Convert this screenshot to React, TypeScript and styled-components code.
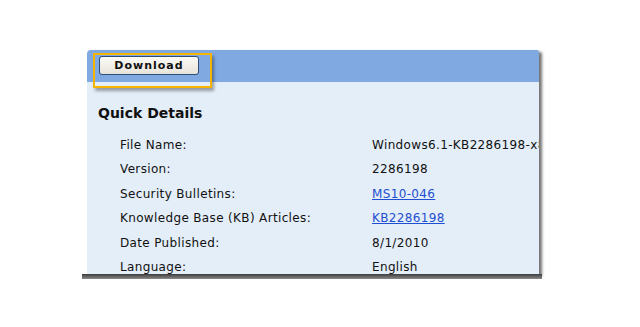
import styled, { createGlobalStyle } from "styled-components";

const GlobalStyle = createGlobalStyle`
  html, body {
    margin: 0;
    padding: 0;
    background: #ffffff;
  }
  body {
    font-family: "DejaVu Sans", Verdana, sans-serif;
  }
`;

type detailRow = {
  label: string;
  value: string;
  link?: boolean;
};

const details: detailRow[] = [
  { label: "File Name:", value: "Windows6.1-KB2286198-x86.msu" },
  { label: "Version:", value: "2286198" },
  { label: "Security Bulletins:", value: "MS10-046", link: true },
  { label: "Knowledge Base (KB) Articles:", value: "KB2286198", link: true },
  { label: "Date Published:", value: "8/1/2010" },
  { label: "Language:", value: "English" },
];

const App = () => {
  return (
    <>
      <GlobalStyle />
      <Page>
        <Panel>
          <PanelHeader>
            <DownloadButton>Download</DownloadButton>
          </PanelHeader>
          <Highlight />
          <PanelBody>
            <Title>Quick Details</Title>
            <DetailList>
              {details.map((row) => (
                <DetailRow key={row.label}>
                  <Label>{row.label}</Label>
                  {row.link ? (
                    <LinkValue href="#">{row.value}</LinkValue>
                  ) : (
                    <Value>{row.value}</Value>
                  )}
                </DetailRow>
              ))}
            </DetailList>
          </PanelBody>
        </Panel>
      </Page>
    </>
  );
};

export default App;

const Page = styled.div`
  width: 640px;
  height: 327px;
  box-sizing: border-box;
  padding: 50px 0 0 87px;
`;

const Panel = styled.div`
  position: relative;
  width: 452px;
  height: 224px;
  display: flex;
  flex-direction: column;
  border-radius: 4px 2px 0 0;
  box-shadow: 3px 2px 3px rgba(0, 0, 0, 0.55);

  &::after {
    content: "";
    position: absolute;
    left: -5px;
    right: -3px;
    bottom: -5px;
    height: 5px;
    background: linear-gradient(#3c3c3c, #8a8a8a);
    filter: blur(0.4px);
  }
`;

const PanelHeader = styled.div`
  height: 32px;
  flex-shrink: 0;
  display: flex;
  align-items: flex-start;
  box-sizing: border-box;
  padding: 6px 0 0 12px;
  background: #7fa9e0;
  border-radius: 4px 2px 0 0;
`;

const DownloadButton = styled.button`
  width: 100px;
  height: 19px;
  padding: 0;
  border: 1px solid #2f4f72;
  border-radius: 3px;
  background: linear-gradient(#fbfaf6, #e6e4da);
  font-family: "DejaVu Sans", Verdana, sans-serif;
  font-weight: bold;
  font-size: 11px;
  letter-spacing: 1px;
  color: #111111;
  line-height: 17px;
`;

const Highlight = styled.div`
  position: absolute;
  left: 6px;
  top: 3px;
  width: 119px;
  height: 35px;
  box-sizing: border-box;
  border: 2px solid #f5b400;
  box-shadow: 2px 3px 3px rgba(0, 0, 0, 0.35);
  pointer-events: none;
`;

const PanelBody = styled.div`
  flex: 1;
  overflow: hidden;
  background: #e4eef8;
  padding-left: 11px;
`;

const Title = styled.h2`
  margin: 0;
  padding-top: 22px;
  font-size: 14px;
  line-height: 18px;
  font-weight: bold;
  color: #111111;
`;

const DetailList = styled.div`
  margin-top: 11px;
  padding-left: 22px;
`;

const DetailRow = styled.div`
  display: grid;
  grid-template-columns: 252px 1fr;
  height: 24.4px;
  line-height: 24.4px;
  font-size: 12px;
  letter-spacing: 0.35px;
  white-space: nowrap;
  color: #111111;
`;

const Label = styled.span``;

const Value = styled.span``;

const LinkValue = styled.a`
  color: #1f4fd1;
  text-decoration: underline;
  justify-self: start;
`;
